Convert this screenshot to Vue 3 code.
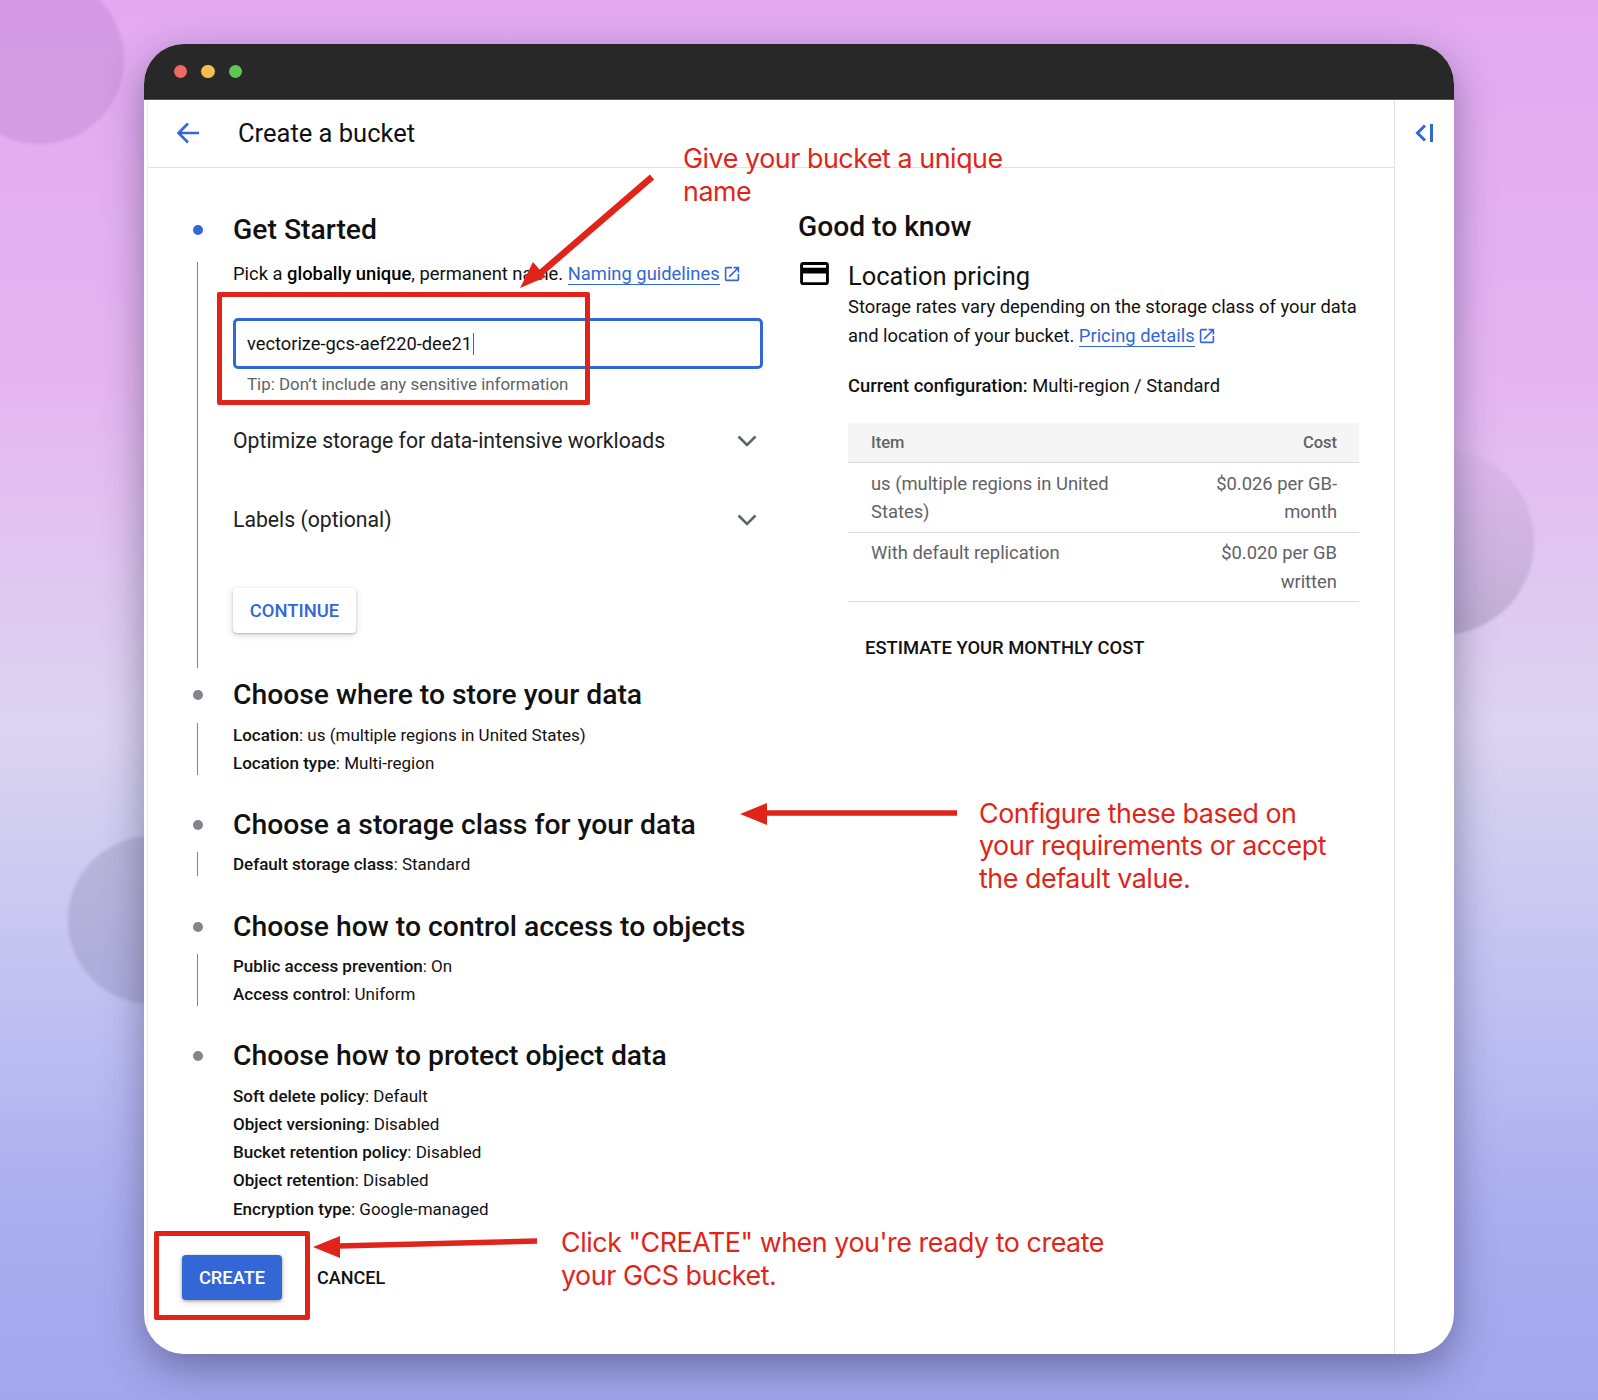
<script setup>
const steps = [
  {
    title: 'Choose where to store your data',
    cls: 's2',
    lines: [
      ['Location', 'us (multiple regions in United States)'],
      ['Location type', 'Multi-region']
    ],
    line: true
  },
  {
    title: 'Choose a storage class for your data',
    cls: 's3',
    lines: [['Default storage class', 'Standard']],
    line: true
  },
  {
    title: 'Choose how to control access to objects',
    cls: 's4',
    lines: [
      ['Public access prevention', 'On'],
      ['Access control', 'Uniform']
    ],
    line: true
  },
  {
    title: 'Choose how to protect object data',
    cls: 's5',
    lines: [
      ['Soft delete policy', 'Default'],
      ['Object versioning', 'Disabled'],
      ['Bucket retention policy', 'Disabled'],
      ['Object retention', 'Disabled'],
      ['Encryption type', 'Google-managed']
    ],
    line: false
  }
]
const expanders = ['Optimize storage for data-intensive workloads', 'Labels (optional)']
const rows = [
  ['us (multiple regions in United States)', '$0.026 per GB-month'],
  ['With default replication', '$0.020 per GB written']
]
</script>

<template>
  <div class="page">
    <span class="blob blob-a"></span>
    <span class="blob blob-b"></span>
    <span class="blob blob-c"></span>

    <div class="window">
      <div class="titlebar">
        <span class="light red"></span>
        <span class="light yellow"></span>
        <span class="light green"></span>
      </div>
      <div class="shell">
        <div class="main">
          <header class="head">
            <svg class="back" viewBox="0 0 24 22" width="24" height="22" fill="none" stroke="#3367d6" stroke-width="2.6">
              <path d="M23 11H3M12 1.5 2.5 11l9.5 9.5" />
            </svg>
            <h1>Create a bucket</h1>
          </header>
          <div class="columns">
            <section class="left">
              <div class="step s1">
                <span class="dot active"></span>
                <h2>Get Started</h2>
                <div class="body railed">
                  <p class="intro">
                    Pick a <b>globally unique</b>, permanent name.
                    <a class="link">Naming guidelines</a>
                    <svg class="ext" viewBox="2 2 20 20" width="16" height="16" fill="#3367d6">
                      <path d="M19 19H5V5h7V3H5a2 2 0 0 0-2 2v14a2 2 0 0 0 2 2h14a2 2 0 0 0 2-2v-7h-2v7zM14 3v2h3.59l-9.83 9.83 1.41 1.41L19 6.41V10h2V3h-7z" />
                    </svg>
                  </p>
                  <div class="input">vectorize-gcs-aef220-dee21<i class="caret"></i></div>
                  <div class="tip">Tip: Don’t include any sensitive information</div>
                  <div v-for="e in expanders" :key="e" class="expander">
                    <span>{{ e }}</span>
                    <svg viewBox="0 0 20 12" width="20" height="12" fill="none" stroke="#5f6368" stroke-width="2.6">
                      <path d="M1.5 1.5 10 10l8.500-8.500" />
                    </svg>
                  </div>
                  <button class="btn-continue">CONTINUE</button>
                </div>
              </div>

              <div v-for="s in steps" :key="s.title" class="step" :class="s.cls">
                <span class="dot"></span>
                <h2>{{ s.title }}</h2>
                <div class="body" :class="{ railed: s.line }">
                  <p v-for="l in s.lines" :key="l[0]" class="kv"><b>{{ l[0] }}</b>: {{ l[1] }}</p>
                </div>
              </div>

              <div class="actions">
                <button class="btn-create">CREATE</button>
                <button class="btn-cancel">CANCEL</button>
              </div>
            </section>

            <aside class="right">
              <h2>Good to know</h2>
              <div class="pricing">
                <svg class="card" viewBox="2 4 20 16" width="29" height="23" fill="#000">
                  <path d="M20 4H4c-1.110 0-2 .89-2 2v12c0 1.110.89 2 2 2h16c1.110 0 2-.89 2-2V6c0-1.110-.89-2-2-2zm0 14H4v-6h16v6zm0-10H4V6h16v2z" />
                </svg>
                <div class="pricing-text">
                  <h3>Location pricing</h3>
                  <p class="desc">
                    Storage rates vary depending on the storage class of your data and location of your bucket.
                    <a class="link">Pricing details</a>
                    <svg class="ext" viewBox="2 2 20 20" width="16" height="16" fill="#3367d6">
                      <path d="M19 19H5V5h7V3H5a2 2 0 0 0-2 2v14a2 2 0 0 0 2 2h14a2 2 0 0 0 2-2v-7h-2v7zM14 3v2h3.59l-9.83 9.83 1.41 1.41L19 6.41V10h2V3h-7z" />
                    </svg>
                  </p>
                  <p class="config"><b>Current configuration:</b> Multi-region / Standard</p>
                  <table>
                    <thead>
                      <tr><th class="c1">Item</th><th class="c2">Cost</th></tr>
                    </thead>
                    <tbody>
                      <tr v-for="r in rows" :key="r[0]">
                        <td class="c1">{{ r[0] }}</td>
                        <td class="c2">{{ r[1] }}</td>
                      </tr>
                    </tbody>
                  </table>
                  <div class="estimate">ESTIMATE YOUR MONTHLY COST</div>
                </div>
              </div>
            </aside>
          </div>
        </div>
        <div class="rail">
          <svg viewBox="0 0 20 18" width="20" height="18" fill="none" stroke="#3367d6" stroke-width="3">
            <path d="M10 1.500 2.500 9l7.500 7.500M16.500 0v18" />
          </svg>
        </div>
      </div>
    </div>

    <svg class="arrows" viewBox="0 0 1598 1400" width="1598" height="1400" fill="#e0241a" stroke="none">
      <path d="M652 177 536 277" stroke="#e0241a" stroke-width="6.500" fill="none" />
      <path d="M520 288 533 262 546 277Z" />
      <path d="M764 813H957" stroke="#e0241a" stroke-width="5.500" fill="none" />
      <path d="M740 814 767 803V825Z" />
      <path d="M338 1246 537 1241" stroke="#e0241a" stroke-width="5.500" fill="none" />
      <path d="M313 1247 340 1236V1258Z" />
    </svg>
    <span class="redbox box-a"></span>
    <span class="redbox box-b"></span>
    <p class="note note-a">Give your bucket a unique<br />name</p>
    <p class="note note-b">Configure these based on<br />your requirements or accept<br />the default value.</p>
    <p class="note note-c">Click "CREATE" when you're ready to create<br />your GCS bucket.</p>
  </div>
</template>

<style>
body { margin: 0; }
</style>

<style scoped>
* { box-sizing: border-box; }
.page {
  position: relative;
  width: 1598px;
  height: 1400px;
  overflow: hidden;
  padding: 44px 0 0 144px;
  font-family: Roboto, "Liberation Sans", sans-serif;
  color: #111;
  background: linear-gradient(180deg, #e2a9f1 0%, #e5b6f0 28%, #dcd5f0 52%, #c2c2f2 70%, #a9acee 88%, #a2a6ec 100%);
}
.blob { position: absolute; border-radius: 50%; filter: blur(1.500px); }
.blob-a { left: -45px; top: -25px; width: 169px; height: 169px; background: rgba(120, 70, 140, 0.15); }
.blob-b { left: 68px; top: 836px; width: 168px; height: 168px; background: rgba(60, 55, 90, 0.15); }
.blob-c { left: 1348px; top: 449px; width: 186px; height: 186px; background: linear-gradient(180deg, rgba(80, 70, 110, 0.04), rgba(70, 60, 100, 0.2)); }

.window {
  position: relative;
  width: 1310px;
  height: 1310px;
  display: flex;
  flex-direction: column;
  border-radius: 40px;
  overflow: hidden;
  background: #fff;
  box-shadow: 0 14px 40px rgba(30, 30, 70, 0.42);
}
.titlebar {
  flex: none;
  height: 56px;
  display: flex;
  align-items: center;
  gap: 14px;
  padding-left: 29.500px;
  background: #282828;
  border-bottom: 1px solid #555;
}
.light { width: 13.500px; height: 13.500px; border-radius: 50%; }
.red { background: #ee6a5f; }
.yellow { background: #f5bd4f; }
.green { background: #61c554; }

.shell { flex: 1; display: flex; min-height: 0; }
.main {
  flex: none;
  width: 1248px;
  margin-left: 3px;
  border-left: 1px solid #ececec;
  border-right: 1px solid #e4e4e4;
  display: flex;
  flex-direction: column;
}
.rail { flex: 1; display: flex; justify-content: center; padding: 24px 0 0 1px; align-items: flex-start; }

.head {
  flex: none;
  height: 68px;
  display: flex;
  align-items: center;
  border-bottom: 1px solid #e2e2e2;
  padding: 0 0 1px 28px;
}
.head h1 { margin: 0 0 1px 38px; font-size: 25.500px; font-weight: 400; color: #111; }
.columns { flex: 1; display: flex; }
.left { flex: none; width: 650px; padding-top: 44px; }
.right { flex: 1; padding-top: 41px; }

.step { position: relative; padding-left: 85px; }
.step h2 { margin: 0; font-size: 28.300px; line-height: 36px; font-weight: 500; color: #111; }
.dot { position: absolute; left: 45px; top: 13px; width: 10px; height: 10px; border-radius: 50%; background: #80868b; }
.dot.active { background: #3367d6; }
.body { position: relative; font-size: 17px; line-height: 28px; margin-top: 8px; }
.railed::before {
  content: "";
  position: absolute;
  left: -36px;
  top: 2px;
  bottom: 2px;
  width: 1px;
  background: #80868b;
}
.s1 .body { margin-top: 12px; padding-bottom: 37px; }
.s2 { margin-top: 7px; }
.s3 { margin-top: 29.500px; }
.s3 .body { margin-top: 7px; }
.s4 { margin-top: 31px; }
.s4 .body { margin-top: 7px; }
.s5 { margin-top: 30px; }
.s5 .body { margin-top: 8px; line-height: 28.250px; }
p { margin: 0; }
b { font-weight: 500; }
.intro { font-size: 18.380px; }
.intro b { font-weight: 500; color: #000; }
.link { color: #3367d6; border-bottom: 1.500px solid #3367d6; }
.ext { vertical-align: -2px; margin-left: 4px; }

.input {
  width: 530px;
  height: 51px;
  margin-top: 30px;
  display: flex;
  align-items: center;
  padding-left: 11px;
  border: 3.500px solid #3367d6;
  border-radius: 5px;
  font-size: 18.300px;
}
.caret { width: 1.500px; height: 22px; margin-left: 1px; background: #3367d6; }
.tip { margin-top: 1px; padding-left: 14px; font-size: 16.900px; line-height: 28px; color: #5f6368; }
.expander {
  width: 530px;
  height: 28px;
  margin-top: 29px;
  display: flex;
  justify-content: space-between;
  align-items: center;
  padding-right: 6px;
  font-size: 21.200px;
  color: #202124;
}
.expander + .expander { margin-top: 51px; }
.btn-continue {
  display: block;
  width: 123px;
  height: 45px;
  margin-top: 54px;
  border: 0;
  border-radius: 4px;
  background: #fff;
  color: #3367d6;
  font: 500 18.400px Roboto, sans-serif;
  box-shadow: 0 1px 2px rgba(60, 64, 67, 0.3), 0 2px 6px 1px rgba(60, 64, 67, 0.15);
}
.actions { display: flex; align-items: center; margin-top: 32px; padding-left: 34px; }
.btn-create {
  width: 100px;
  height: 45px;
  border: 0;
  border-radius: 4px;
  background: #3367d6;
  color: #fff;
  font: 500 18.300px Roboto, sans-serif;
  box-shadow: 0 1px 3px rgba(60, 64, 67, 0.4), 0 2px 6px rgba(60, 64, 67, 0.2);
}
.btn-cancel {
  margin-left: 35px;
  padding: 0;
  border: 0;
  background: none;
  color: #111;
  font: 500 18px Roboto, sans-serif;
}

.right h2 { margin: 0; font-size: 28.200px; line-height: 36px; font-weight: 500; color: #111; }
.pricing { display: flex; margin-top: 14px; }
.card { flex: none; margin: 3px 0 0 2px; }
.pricing-text { width: 511px; margin-left: 19px; font-size: 18.380px; line-height: 28.500px; }
.pricing-text h3 { margin: 0; font-size: 25.500px; line-height: 34px; font-weight: 400; color: #111; }
.config { margin-top: 22px; }
table {
  width: 511px;
  margin-top: 22px;
  table-layout: fixed;
  border-collapse: collapse;
  color: #5f6368;
}
th { height: 40px; padding: 1px 22px 0 23px; background: #f5f5f5; font-size: 16.500px; font-weight: 500; border-bottom: 1px solid #dadce0; }
td { height: 69.500px; padding: 6.500px 22px 0 23px; vertical-align: top; border-bottom: 1.500px solid #dadce0; }
.c1 { text-align: left; width: 326px; }
.c2 { text-align: right; }
.estimate { margin-top: 32px; padding-left: 17px; font-size: 18.400px; font-weight: 500; color: #111; }

.arrows { position: absolute; left: 0; top: 0; pointer-events: none; }
.redbox { position: absolute; border: 5px solid #e0241a; border-radius: 2px; pointer-events: none; }
.box-a { left: 217px; top: 292px; width: 373px; height: 113px; }
.box-b { left: 154px; top: 1231px; width: 156px; height: 89px; }
.note {
  position: absolute;
  margin: 0;
  font-family: Inter, Roboto, sans-serif;
  font-size: 26.800px;
  letter-spacing: -0.430px;
  line-height: 32.500px;
  color: #e0241a;
  white-space: nowrap;
}
.note-a { left: 683px; top: 142px; }
.note-b { left: 979px; top: 796.500px; }
.note-c { left: 561px; top: 1226px; }
</style>
